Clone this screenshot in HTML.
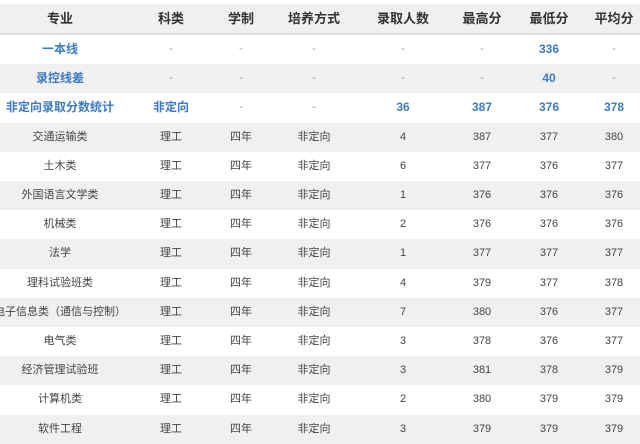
<!DOCTYPE html>
<html><head><meta charset="utf-8"><style>
*{margin:0;padding:0;box-sizing:border-box}
body{width:640px;height:438px;overflow:hidden;background:#fff;font-family:"Liberation Sans","Noto Sans CJK SC",sans-serif;color:#444;position:relative}
.r{position:absolute;left:0;width:640px;height:29.2px;font-size:11px}
.g{background:#f0f0f0}
.c{position:absolute;top:0;height:100%;line-height:29px;text-align:center;white-space:nowrap;transform:translateX(-50%)}
.h{font-size:13px;font-weight:bold;color:#333;border-bottom:2px solid #ddd}
.h .c{line-height:30px}
.b{color:#3a7bc4;font-weight:bold;font-size:12px}
.d{color:#999}
</style></head><body>
<div id="t"></div>
<script>
var X=[60,171,241,314,403,482,549,614];
var rows=[
["专业","科类","学制","培养方式","录取人数","最高分","最低分","平均分"],
["一本线","-","-","-","-","-","336","-"],
["录控线差","-","-","-","-","-","40","-"],
["非定向录取分数统计","非定向","-","-","36","387","376","378"],
["交通运输类","理工","四年","非定向","4","387","377","380"],
["土木类","理工","四年","非定向","6","377","376","377"],
["外国语言文学类","理工","四年","非定向","1","376","376","376"],
["机械类","理工","四年","非定向","2","376","376","376"],
["法学","理工","四年","非定向","1","377","377","377"],
["理科试验班类","理工","四年","非定向","4","379","377","378"],
["电子信息类（通信与控制）","理工","四年","非定向","7","380","376","377"],
["电气类","理工","四年","非定向","3","378","376","377"],
["经济管理试验班","理工","四年","非定向","3","381","378","379"],
["计算机类","理工","四年","非定向","2","380","379","379"],
["软件工程","理工","四年","非定向","3","379","379","379"]];
var h="";
rows.forEach(function(r,i){
 var top=35+(i-1)*29.2;
 var cls="r"+((i%2==0)?" g":"");
 if(i==0) h+='<div class="r h g" style="top:4px;height:31px">';
 else h+='<div class="'+cls+'" style="top:'+top+'px">';
 r.forEach(function(t,j){
  var s="";
  if(i>=1&&i<=3){ if(t=="-") s="d"; else s="b"; }
  h+='<div class="c '+s+'" style="left:'+X[j]+'px">'+t+'</div>';
 });
 h+='</div>';
});
document.getElementById("t").innerHTML=h;
</script>
</body></html>
